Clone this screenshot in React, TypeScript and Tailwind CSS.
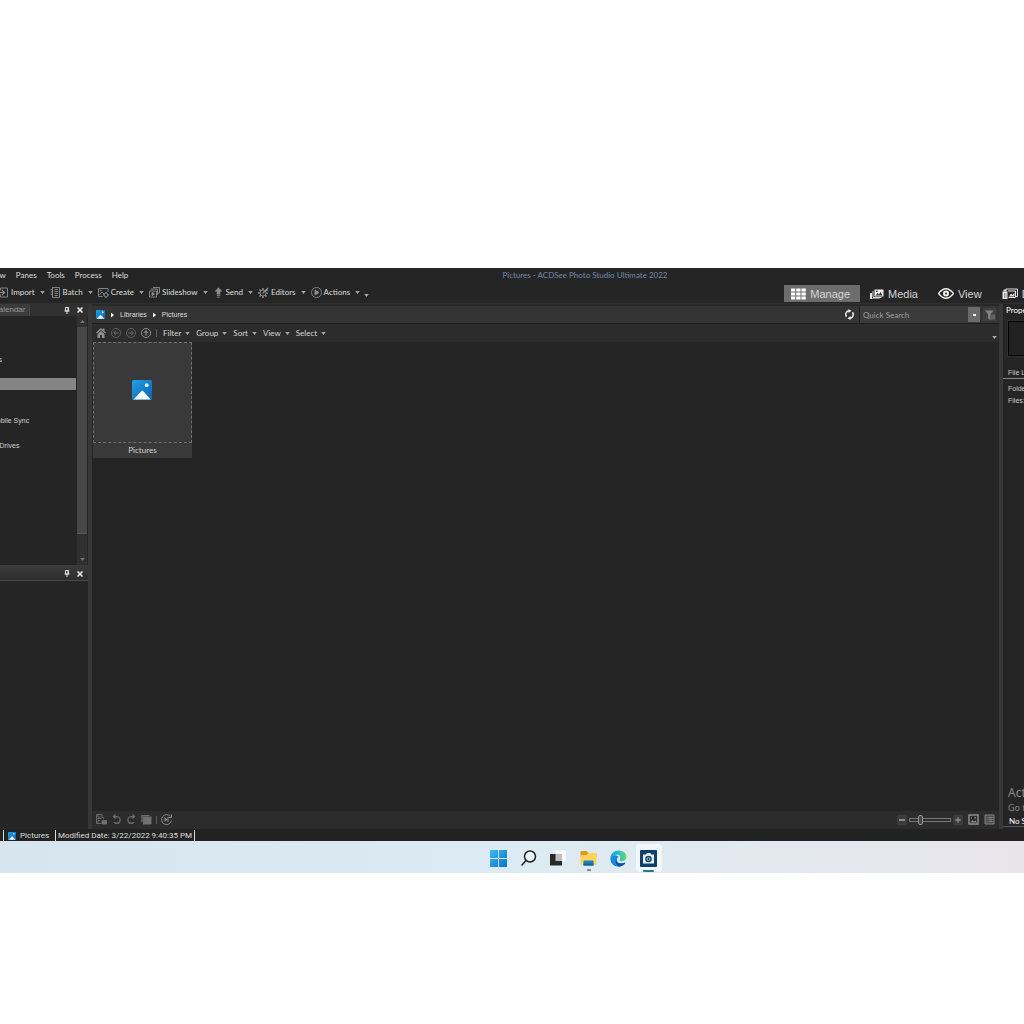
import type { ReactNode } from "react";

const ui = "font-['Lato','Open_Sans',sans-serif]";
const roboto = "font-['Roboto','Open_Sans',sans-serif]";
const noto = "font-['Noto_Sans','Open_Sans',sans-serif]";
const arial = "font-['Liberation_Sans',Arial,sans-serif]";

function Caret({ className = "" }: { className?: string }) {
  return (
    <svg viewBox="0 0 6 4" className={"h-[3px] w-[5px] shrink-0 fill-[#a8a8a8] " + className}>
      <path d="M0 0h6L3 4z" />
    </svg>
  );
}

function CrumbArrow() {
  return (
    <svg viewBox="0 0 5 6" className="h-[6px] w-[5px] shrink-0 fill-white">
      <path d="M1 .5L4 3 1 5.500z" />
    </svg>
  );
}

function Stroke({ children, className = "h-[11px] w-[11px]" }: { children: ReactNode; className?: string }) {
  return (
    <svg viewBox="0 0 22 22" fill="none" stroke="currentColor" strokeWidth="1.8" className={"shrink-0 " + className}>
      {children}
    </svg>
  );
}

const ImportIcon = () => (
  <Stroke>
    <path d="M5 7V2h14v18H5v-5" />
    <path d="M0 11h12M8 6l5 5-5 5" strokeWidth="2.400" />
  </Stroke>
);
const BatchIcon = () => (
  <Stroke>
    <path d="M5 1h14v20H5zM1 5h4M1 10h4M1 15h4M9 5h7M9 9h7M9 13h7M9 17h7M5 1v20" />
  </Stroke>
);
const CreateIcon = () => (
  <Stroke>
    <path d="M9 19H1V3h19v7M3 16l5-6 4 4" />
    <circle cx="5.500" cy="7" r="1" />
    <circle cx="16" cy="16" r="4" />
    <path d="M16 10v3M16 19v3M10 16h3M19 16h3" />
  </Stroke>
);
const SlideshowIcon = () => (
  <Stroke>
    <path d="M8 1h13v11h-3M4 5v-1h13v11h-2" />
    <path d="M1 8h14v12H1z" />
    <path d="M6 10.500v7l5-3.500z" fill="currentColor" />
  </Stroke>
);
const SendIcon = () => (
  <Stroke>
    <path d="M11 1l8 8h-4.500v6h-7V9H3zM7.500 16.500h7V18h-7zM7.500 19.500h7V21h-7z" fill="currentColor" stroke="none" />
  </Stroke>
);
const EditorsIcon = () => (
  <Stroke>
    <circle cx="10" cy="12" r="6" />
    <path d="M10 2v4M10 18v4M0 12h4M3 5l3 3M3 19l3-3M14 16l3 3" strokeWidth="3" />
    <path d="M9 13L20 2M15 8l5-2M16 12h4" strokeWidth="2.500" />
  </Stroke>
);
const ActionsIcon = () => (
  <Stroke>
    <circle cx="11" cy="11" r="10" />
    <path d="M8 6v10l8-5z" fill="currentColor" />
  </Stroke>
);

const tools: { label: string; icon: ReactNode }[] = [
  { label: "Import", icon: <ImportIcon /> },
  { label: "Batch", icon: <BatchIcon /> },
  { label: "Create", icon: <CreateIcon /> },
  { label: "Slideshow", icon: <SlideshowIcon /> },
  { label: "Send", icon: <SendIcon /> },
  { label: "Editors", icon: <EditorsIcon /> },
  { label: "Actions", icon: <ActionsIcon /> },
];

function PictureIcon({ className }: { className: string }) {
  return (
    <svg viewBox="0 0 20 20" className={"shrink-0 " + className}>
      <defs>
        <linearGradient id="sky" x1="0" y1="0" x2="1" y2="1">
          <stop offset="0" stopColor="#23a0e8" />
          <stop offset="1" stopColor="#0b62b4" />
        </linearGradient>
      </defs>
      <rect width="20" height="20" rx="1.500" fill="url(#sky)" />
      <circle cx="14.700" cy="5.200" r="1.900" fill="#e8f6ff" />
      <path d="M1.500 19.500l8-8.500q.8-.8 1.600 0l7.700 8.500z" fill="#f4faff" />
    </svg>
  );
}

function Pin() {
  return (
    <svg viewBox="0 0 12 14" className="h-[7px] w-[6px] fill-none stroke-[#e2e2e2]" strokeWidth="2">
      <path d="M3 1h6v7H3zM8 1v7M1 8h10M6 8v6" />
    </svg>
  );
}
function Close() {
  return (
    <svg viewBox="0 0 12 12" className="h-[6px] w-[6px] fill-none stroke-[#f2f2f2]" strokeWidth="3">
      <path d="M1 1l10 10M11 1L1 11" />
    </svg>
  );
}

function PaneButtons() {
  return (
    <div className="ml-auto flex items-center gap-[7px] pr-[5px]">
      <button aria-label="Pin pane"><Pin /></button>
      <button aria-label="Close pane"><Close /></button>
    </div>
  );
}

function MediaIcon() {
  return (
    <svg viewBox="0 0 28 20" className="h-[10px] w-[14px] shrink-0">
      <path d="M9 1h18v14H9z" fill="#f0f0f0" />
      <path d="M6 4v13h17" fill="none" stroke="#d6d6d6" strokeWidth="2" />
      <path d="M0 8h4v11h15v1H0z" fill="#e6e6e6" />
      <path d="M11 13l4-5 3 3 3-5 4 7zM12 3h3v3h-3z" fill="#333" />
    </svg>
  );
}
function ManageIcon() {
  return (
    <svg viewBox="0 0 30 24" className="h-3 w-[15px] shrink-0 fill-white">
      {[1, 9, 17].map((y) => [0, 10.5, 21].map((x) => <rect key={x + "-" + y} x={x} y={y} width="8.500" height="6" />))}
    </svg>
  );
}
function EyeIcon() {
  return (
    <svg viewBox="0 0 32 22" className="h-[11px] w-4 shrink-0">
      <path d="M1 11Q16-8 31 11 16 30 1 11z" fill="none" stroke="#f0f0f0" strokeWidth="2.600" />
      <circle cx="16" cy="11" r="6" fill="#f0f0f0" />
      <circle cx="16" cy="11" r="2" fill="#252525" />
    </svg>
  );
}
function DevelopIcon() {
  return (
    <svg viewBox="0 0 32 24" className="h-3 w-4 shrink-0">
      <path d="M8 5V2h23v15h-4M12 6h15v13H13" fill="none" stroke="#e0e0e0" strokeWidth="2" />
      <path d="M1 7h10v15H1z" fill="#e4e4e4" />
      <path d="M3 3h6v4H3zM14 17l4-6 3 3 4-5v8z" fill="#ddd" />
      <path d="M5 10v10M8 10v10" stroke="#555" />
    </svg>
  );
}

function Round({ d, label, bright = false }: { d: string; label: string; bright?: boolean }) {
  return (
    <button aria-label={label} className={bright ? "text-[#a0a0a0]" : "text-[#6c6c6c]"}>
      <Stroke className="h-[10px] w-[10px]">
        <circle cx="11" cy="11" r="10" />
        <path d={d} strokeWidth="2.200" />
      </Stroke>
    </button>
  );
}

function TreePane() {
  return (
    <aside className="flex w-[88px] shrink-0 flex-col overflow-hidden">
      <header className="flex h-3 items-center bg-[#303030]">
        <span className={arial + " -ml-[7px] h-3 rounded-tr-[3px] border-r border-[#4a4a4a] bg-[#3b3b3b] pr-1 text-[8px] leading-3 text-[#9a9a9a]"}>
          Calendar
        </span>
        <PaneButtons />
      </header>
      <div className="flex h-[249px]">
        <ul className={arial + " mr-[1px] flex-1 pt-[38px] text-[7px] leading-3 whitespace-nowrap text-[#d0d0d0]"}>
          <li className="-ml-[31px]">OneDrives</li>
          <li className="h-3" />
          <li className="h-3 bg-[#858585]" />
          <li className="h-6" />
          <li className="-ml-[9px] mt-[1px]">Mobile Sync</li>
          <li className="h-3" />
          <li className="-ml-4 mt-[1px]">Disc Drives</li>
        </ul>
        <div className="mr-[1px] flex w-[10px] flex-col items-center bg-[#303030]">
          <Caret className="my-1 rotate-180 opacity-60" />
          <div className="w-full flex-1 border-b border-[#5a5a5a] bg-[#474747]" />
          <Caret className="mt-6 mb-1 opacity-60" />
        </div>
      </div>
      <header className="flex h-4 items-center border-b border-[#4a4a4a] bg-linear-to-b from-[#3c3c3c] to-[#2d2d2d] pt-[2px]">
        <PaneButtons />
      </header>
    </aside>
  );
}

function Browser() {
  return (
    <main className="flex min-w-0 flex-1 flex-col">
      <div className="flex h-5 items-center border-t-2 border-b border-[#1f1f1f] border-t-[#282828] bg-[#343434]">
        <nav className={arial + " flex items-center pl-1 text-[7px] leading-[10px] text-[#dedede]"}>
          <PictureIcon className="mr-[5px] h-[9px] w-[9px]" />
          <CrumbArrow />
          <a href="#libraries" className="mx-[5px]">Libraries</a>
          <CrumbArrow />
          <a href="#pictures" className="ml-[5px]">Pictures</a>
        </nav>
        <button aria-label="Refresh" className="mr-1 ml-auto text-[#ededed]">
          <Stroke className="h-[11px] w-[11px]">
            <path d="M10 3.500A7.500 7.500 0 0 0 5 15.500M12 18.500A7.500 7.500 0 0 0 17 6.500" strokeWidth="3" />
            <path d="M9 0l6 3.500L9 8zM13 14l-6 4.500 6 3.500z" fill="currentColor" stroke="none" />
          </Stroke>
        </button>
        <div className="flex h-[17px] w-[121px] border-l border-[#1f1f1f] bg-[#3b3b3b]">
          <input
            aria-label="Quick Search"
            placeholder="Quick Search"
            className={ui + " w-0 flex-1 bg-transparent pl-[3px] text-[8px] text-[#ccc] outline-none placeholder:text-[#a0a0a0]"}
          />
          <button aria-label="Search options" className="my-[1px] flex w-3 items-center justify-center bg-[#6b6b6b]">
            <span className="h-[2px] w-[3px] bg-white" />
          </button>
        </div>
        <button aria-label="Filter search" className="mr-[3px] ml-[3px] flex h-[13px] w-[13px] items-center justify-center bg-[#3f3f3f]">
          <svg viewBox="0 0 20 20" className="h-[10px] w-[10px] fill-[#858585]">
            <path d="M0 1h17l-6 7v12l-5-3V8zM13 9h2v10h-2zM17 9h2v10h-2z" />
          </svg>
        </button>
      </div>

      <div className={ui + " flex h-[18px] items-center bg-[#2c2c2c] pl-1 text-[8px] leading-[10px] text-[#d6d6d6]"}>
        <div className="flex items-center gap-[5px]">
          <button aria-label="Home">
            <svg viewBox="0 0 20 20" className="h-[10px] w-[10px] fill-[#929292]">
              <path d="M10 0l10 9-1.500 2L10 4l-8.500 7L0 9zM3 12l7-6 7 6v8h-5v-6H8v6H3zM14 1h3v5l-3-3z" />
            </svg>
          </button>
          <Round label="Back" d="M17 11H6M11 6l-5 5 5 5" />
          <Round label="Forward" d="M5 11h11M11 6l5 5-5 5" />
          <Round label="Up" d="M11 17V6M6 11l5-5 5 5" bright />
          <span className="h-2 w-[1px] bg-[#5c5c5c]" />
        </div>
        <div className="ml-[6px] flex items-center gap-[6px]">
          {["Filter", "Group", "Sort", "View", "Select"].map((label) => (
            <button key={label} className="flex items-center gap-1">
              {label}
              <Caret />
            </button>
          ))}
        </div>
        <button aria-label="More options" className="mt-2 mr-[2px] ml-auto"><Caret /></button>
      </div>

      <section className="flex-1 bg-[#242424] px-[1px]">
        <figure className="w-[99px] bg-[#393939]">
          <div className="flex h-[101px] items-center justify-center border border-dashed border-[#707070]">
            <PictureIcon className="mt-[-6px] mr-[1px] h-5 w-5" />
          </div>
          <figcaption className={ui + " h-[15px] text-center text-[8px] leading-[15px] text-[#d6d6d6]"}>Pictures</figcaption>
        </figure>
      </section>

      <footer className="flex h-[18px] items-center bg-[#2c2c2c] pr-1 pb-[1px] pl-1 text-[#707070]">
        <div className="flex items-center gap-1">
          <button aria-label="Save">
            <Stroke>
              <path d="M1 1h11v6h3v3M1 1v18h9M1 9h10M4 1v5h5M4 19v-6h4" />
              <path d="M12 13h9v7h-9zM12 17h9" fill="currentColor" />
            </Stroke>
          </button>
          <button aria-label="Rotate left">
            <Stroke><path d="M6 5h6a7 7 0 1 1-6 11.500M9 1L5 5l4 4" strokeWidth="2.500" /></Stroke>
          </button>
          <button aria-label="Rotate right">
            <Stroke><path d="M16 5h-6a7 7 0 1 0 6 11.500M13 1l4 4-4 4" strokeWidth="2.500" /></Stroke>
          </button>
          <button aria-label="Stack">
            <Stroke>
              <path d="M2 16V3h15" strokeWidth="2.500" />
              <rect x="5" y="6" width="15" height="14" fill="currentColor" />
            </Stroke>
          </button>
          <span className="h-2 w-[1px] bg-[#5c5c5c]" />
          <button aria-label="Play" className="text-[#8c8c8c]">
            <Stroke>
              <path d="M19 5a10 10 0 1 0 2 8M21 1v6h-6" strokeWidth="2" />
              <path d="M7 6v10l6-5zM13 6v10h2V6z" fill="currentColor" stroke="none" />
            </Stroke>
          </button>
        </div>
        <div className="ml-auto flex items-center text-[#8c8c8c]">
          <button aria-label="Zoom out" className="flex h-[10px] w-[10px] items-center justify-center bg-[#3b3b3b]">
            <span className="h-[2px] w-[6px] bg-[#8c8c8c]" />
          </button>
          <input
            type="range"
            aria-label="Thumbnail size"
            defaultValue={22}
            className="mx-[2px] h-[10px] w-[42px] appearance-none bg-transparent [&::-webkit-slider-runnable-track]:h-1 [&::-webkit-slider-runnable-track]:border [&::-webkit-slider-runnable-track]:border-[#777] [&::-webkit-slider-thumb]:-mt-[4px] [&::-webkit-slider-thumb]:h-[10px] [&::-webkit-slider-thumb]:w-[5px] [&::-webkit-slider-thumb]:appearance-none [&::-webkit-slider-thumb]:rounded-[2px] [&::-webkit-slider-thumb]:border [&::-webkit-slider-thumb]:border-[#999] [&::-webkit-slider-thumb]:bg-[#444]"
          />
          <button aria-label="Zoom in" className="mr-[5px] bg-[#3b3b3b]">
            <Stroke className="h-[10px] w-[10px]"><path d="M11 5v12M5 11h12" strokeWidth="3" /></Stroke>
          </button>
          <button aria-label="Thumbnails" className="mr-[5px]">
            <Stroke className="h-[11px] w-[11px]">
              <path d="M2 2h18v18H2z" strokeWidth="3" />
              <path d="M5 17l4-5 3 3 3-2 3 4zM13 6h3v3h-3zM6 7h2v2H6z" fill="currentColor" stroke="none" />
            </Stroke>
          </button>
          <button aria-label="Details">
            <Stroke className="h-[11px] w-[11px]">
              <path d="M2 2h18v18H2z" fill="#4a4a4a" />
              <path d="M5 7h2M9 7h8M5 11h2M9 11h8M5 15h2M9 15h8" />
            </Stroke>
          </button>
        </div>
      </footer>
    </main>
  );
}

function PropertiesPane() {
  return (
    <aside className={arial + " flex w-[21px] shrink-0 flex-col overflow-hidden whitespace-nowrap text-[7px] leading-3 text-[#c8c8c8]"}>
      <header className={ui + " h-[13px] pl-[3px] text-[8px] text-white"}>Properties</header>
      <div className="mt-1 ml-[5px] h-[35px] w-[60px] border border-black bg-[#212121] outline outline-[#303030]" />
      <div className="mt-[11px] h-3 border-b border-[#8a8a8a] pl-[5px]">File List</div>
      <dl className="mt-1 pl-[5px]">
        <dt>Folders:</dt>
        <dt>Files:</dt>
      </dl>
      <div className={noto + " mt-auto pl-[5px] text-[#888]"}>
        <p className="text-[12px] leading-4">Activate</p>
        <p className="text-[9px] leading-[14px]">Go to Settings</p>
      </div>
      <div className={ui + " mb-[2px] h-3 w-[70px] border-b border-[#555] pl-[6px] text-[8px] text-white"}>No Selection</div>
    </aside>
  );
}

function EdgeIcon() {
  return (
    <svg viewBox="0 0 32 32" className="h-[17px] w-[17px]">
      <defs>
        <linearGradient id="edgeTop" x1="0" x2="1">
          <stop offset="0" stopColor="#1699dc" />
          <stop offset=".55" stopColor="#27c3cf" />
          <stop offset="1" stopColor="#69dc4c" />
        </linearGradient>
      </defs>
      <path d="M1 16a15 15 0 0 0 15 15c6 0 11-3 13-8-3 2-6 2-9 2-5 0-8-4-7-9z" fill="#0c5daf" />
      <path d="M1 16C1 7 8 1 16 1c9 0 15 6 15 12 0 5-4 8-9 8-3 0-5-1-4-3 4-5 0-9-5-9-6 0-11 3-12 8z" fill="url(#edgeTop)" />
      <path d="M1 17c1-6 6-8 10-7 3 1 5 2 5 3-6 3-5 12 2 18C8 32 1 25 1 17z" fill="#168bdc" />
      <path d="M12 16c-2 8 6 13 17 8-3 5-7 7-12 7-6-4-8-10-5-15z" fill="#104ca0" />
    </svg>
  );
}

function Taskbar() {
  const item = "relative flex h-7 w-[26px] items-center justify-center rounded-[3px]";
  return (
    <nav aria-label="Taskbar" className="flex h-8 items-center justify-center gap-1 bg-linear-to-r from-[#d7e5ee] via-[#dcebf3] to-[#e8e5ea] pt-[2px] pl-[123px]">
      <button aria-label="Start" className={item}>
        <svg viewBox="0 0 16 16" className="h-[17px] w-[17px]">
          <defs>
            <linearGradient id="start" x1="0" y1="0" x2="1" y2="1">
              <stop offset="0" stopColor="#42b7f2" />
              <stop offset="1" stopColor="#0874ca" />
            </linearGradient>
          </defs>
          <path d="M0 0h7.600v7.600H0zM8.400 0H16v7.600H8.400zM0 8.400h7.600V16H0zM8.400 8.400H16V16H8.400z" fill="url(#start)" />
        </svg>
      </button>
      <button aria-label="Search" className={item}>
        <svg viewBox="0 0 32 32" className="h-4 w-4" fill="#e8f3f8" stroke="#222" strokeWidth="3">
          <circle cx="18" cy="13" r="11" />
          <path d="M10 21l-8 9" strokeLinecap="round" />
        </svg>
      </button>
      <button aria-label="Task view" className={item}>
        <svg viewBox="0 0 34 32" className="h-4 w-[17px]">
          <path d="M11 1h21v21H11z" fill="#f8f8f8" />
          <path d="M0 8h24v23H0z" fill="#292929" />
          <path d="M11 8h13v14H11z" fill="#bdbdbd" />
        </svg>
      </button>
      <button aria-label="File Explorer" className={item}>
        <svg viewBox="0 0 32 30" className="h-[15px] w-[17px]">
          <path d="M0 2q0-2 2-2h10l4 4h14q2 0 2 2v6H0z" fill="#dc9b1b" />
          <path d="M0 8h12l4-4h14q2 0 2 2v22H0z" fill="#ffd25b" />
          <path d="M6 21q0-2 2-2h16q2 0 2 2v8H6z" fill="#1b7fc4" />
          <path d="M6 25h20v4H6z" fill="#0f63a5" />
        </svg>
        <span className="absolute bottom-[1px] h-[2px] w-1 rounded-full bg-[#77838b]" />
      </button>
      <button aria-label="Edge" className={item}><EdgeIcon /></button>
      <button aria-label="ACDSee" className={item + " bg-[#f1f8fb]"}>
        <svg viewBox="0 0 34 34" className="h-[17px] w-[17px]">
          <rect width="34" height="34" rx="2" fill="#103f68" />
          <path d="M6 9h6l2-3h7l1 3h6v18H6z" fill="#e6f1f6" />
          <circle cx="17" cy="18" r="6.500" fill="#103f68" />
          <circle cx="17" cy="18" r="3" fill="none" stroke="#8fd0d8" strokeWidth="2" />
        </svg>
        <span className="absolute bottom-0 h-[2px] w-[11px] rounded-full bg-[#257a8c]" />
      </button>
    </nav>
  );
}

const modeClass = "flex h-[17px] items-center gap-1 pr-[10px] pl-[7px]";

export default function App() {
  return (
    <div className="min-h-screen overflow-hidden bg-white pt-[268px]">
      <div className={ui + " bg-[#252525] text-[8px] leading-[10px] text-[#dedede]"}>
        <div className="grid h-[15px] grid-cols-[1fr_auto_1fr] items-center pb-[2px]">
          <nav className="-ml-3 flex gap-[10px]">
            {["View", "Panes", "Tools", "Process", "Help"].map((label) => (
              <button key={label}>{label}</button>
            ))}
          </nav>
          <h1 className="relative left-[73px] text-[#7089ab]">Pictures - ACDSee Photo Studio Ultimate 2022</h1>
        </div>
        <div className="flex h-[21px] overflow-hidden whitespace-nowrap border-b border-[#303030]">
          <div className="-ml-[2px] flex h-[18px] items-center gap-[5px]">
            {tools.map(({ label, icon }) => (
              <button key={label} className="flex items-center gap-[2px] text-[#8d8d8d]">
                {icon}
                <span className="mr-[3px] text-[#dedede]">{label}</span>
                <Caret />
              </button>
            ))}
            <button aria-label="Toolbar options" className="-ml-[1px] mt-[7px]"><Caret /></button>
          </div>
          <div className={arial + " mt-[2px] -mr-12 ml-auto flex gap-[3px] text-[11px] leading-4 text-[#d5d5d5]"}>
            <button className={modeClass + " bg-[#6d6d6d]"}><ManageIcon />Manage</button>
            <button className={modeClass}><MediaIcon />Media</button>
            <button className={modeClass}><EyeIcon />View</button>
            <button className={modeClass}><DevelopIcon />Develop</button>
          </div>
        </div>

        <div className="flex h-[525px]">
          <TreePane />
          <div className="w-1 shrink-0 bg-[#373737]" />
          <Browser />
          <div className="w-1 shrink-0 bg-[#373737]" />
          <PropertiesPane />
        </div>

        <footer className={roboto + " flex h-3 items-center bg-[#222] pt-[1px] whitespace-nowrap"}>
          <span className="ml-[3px] h-[11px] w-[1px] bg-[#ddd]" />
          <PictureIcon className="mr-1 ml-1 h-2 w-2" />
          <span className="w-[35px]">Pictures</span>
          <span className="h-[11px] w-[1px] bg-[#ddd]" />
          <span className="mx-[2px] min-w-[134px]">Modified Date: 3/22/2022 9:40:35 PM</span>
          <span className="h-[11px] w-[1px] bg-[#ddd]" />
        </footer>
      </div>
      <Taskbar />
    </div>
  );
}
